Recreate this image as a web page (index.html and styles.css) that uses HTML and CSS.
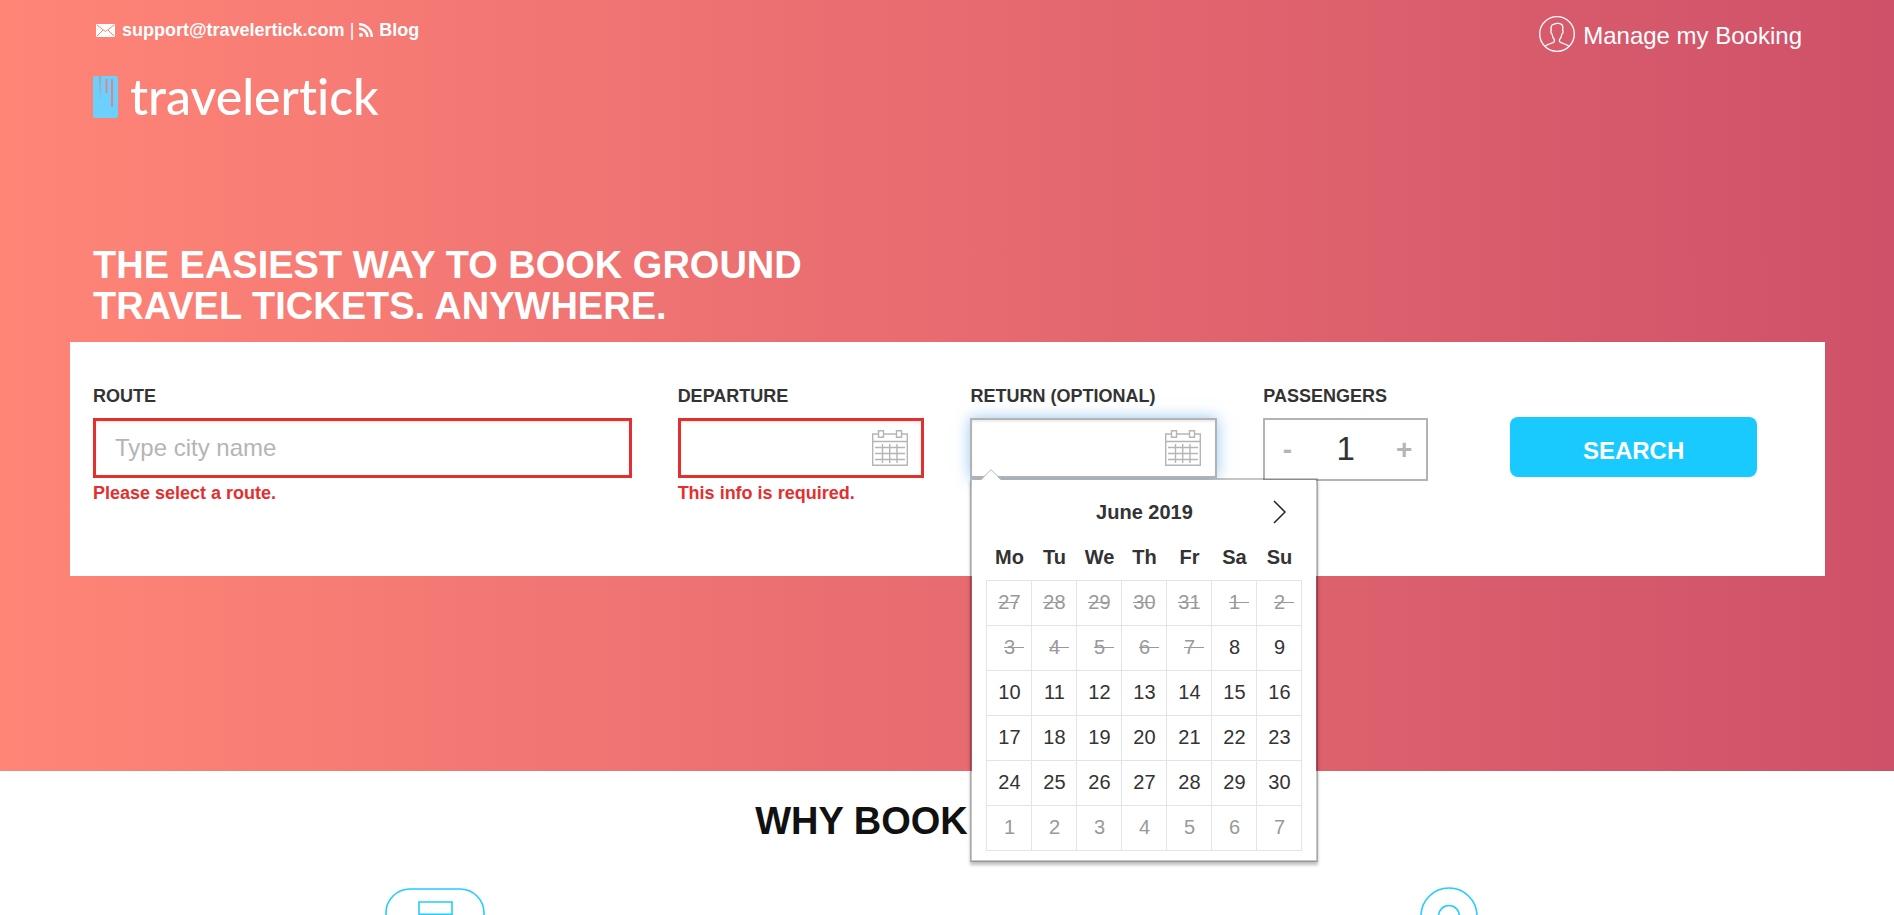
FILE: index.html
```html
<!DOCTYPE html>
<html lang="en">
<head>
<meta charset="utf-8">
<title>travelertick</title>
<link rel="stylesheet" href="styles.css">
</head>
<body>
<div class="hero">
  <header class="header">
    <div class="brand">
      <div class="contact">
        <a class="contact-link" href="mailto:support@travelertick.com"><svg class="icon-mail" viewBox="0 0 19 13" width="19" height="13" aria-hidden="true"><rect width="19" height="13" rx="1" fill="#fff"/><path d="M1 1l8.500 6.500L18 1M1 12l6-6M18 12l-6-6" fill="none" stroke="#fb8075" stroke-width="1"/></svg>support@travelertick.com</a>
        <span class="divider">|</span>
        <a class="contact-link" href="#blog"><svg class="icon-rss" viewBox="0 0 14 14" width="14" height="14" aria-hidden="true"><circle cx="2" cy="12" r="2" fill="#fff"/><path d="M0 5.500A8.500 8.500 0 0 1 8.500 14M0 1.200A12.800 12.800 0 0 1 12.800 14" fill="none" stroke="#fff" stroke-width="2.600"/></svg>Blog</a>
      </div>
      <a class="logo" href="#home"><svg viewBox="0 0 25 42" width="25" height="42" aria-hidden="true"><rect width="25" height="42" rx="2" fill="#6cd0fd"/><path d="M6.200 0h1.600L7.200 26zM12.500 3h2v14h-2zM18 3h2v28h-2z" fill="#d9868f"/></svg><span>travelertick</span></a>
    </div>
    <a class="manage" href="#booking"><svg viewBox="0 0 36 36" width="36" height="36" fill="none" stroke="#fff" stroke-width="1.300" stroke-linejoin="round" aria-hidden="true"><circle cx="18" cy="18" r="17.300"/><path d="M6 30.500c1-1.500 4-2.500 8-3.800 1.300-.5 1.700-1.200 1.500-3-1.600-1.500-2.200-3.500-2.500-5.700-1.300-.8-1.500-3-.7-4-.8-3 .2-5.500 2.700-5.800 2-1.400 8-1.300 8.700 2 .4 1.300.1 2.700-.1 3.800.8 1 .6 3.200-.7 4-.3 2.200-.9 4.200-2.500 5.700-.2 1.800.2 2.500 1.500 3 4 1.300 7 2.300 8 3.800"/></svg>Manage my Booking</a>
  </header>
  <h1 class="headline">The easiest way to book ground<br>travel tickets. Anywhere.</h1>
  <form class="search-card">
    <div class="field">
      <label class="label" for="route">Route</label>
      <input class="input input-error" id="route" type="text" placeholder="Type city name">
      <p class="error">Please select a route.</p>
    </div>
    <div class="field">
      <label class="label" for="departure">Departure</label>
      <div class="date-box">
        <input class="input input-error" id="departure" type="text">
        <svg class="icon-cal" viewBox="0 0 36 36" width="36" height="36" aria-hidden="true"><use href="#cal"/></svg>
      </div>
      <p class="error">This info is required.</p>
    </div>
    <div class="field">
      <label class="label" for="return">Return (optional)</label>
      <div class="date-box">
        <input class="input input-active" id="return" type="text">
        <svg class="icon-cal" viewBox="0 0 36 36" width="36" height="36" aria-hidden="true"><g id="cal" fill="none" stroke="#b5b5b5" stroke-width="1.400"><path d="M6 4H.7v31.300h34.600V4H30M12 4h12M.7 11.500h34.600M3 17.500h30M3 23.500h30M3 29.500h30M10.500 14v19M17.700 14v19M25 14v19"/><path d="M6.500.7h5v6.600h-5zM24.500.7h5v6.600h-5z"/></g></svg>
        <div class="picker">
          <svg class="picker-tip" viewBox="0 0 20 11" width="20" height="11" aria-hidden="true"><path d="M0 11L10 1l10 10z" fill="#fff"/><path d="M0 10.500L10 .7l10 9.800" fill="none" stroke="#b5b5b5"/></svg>
          <div class="picker-head">
            <span>June 2019</span>
            <button class="next" type="button" aria-label="Next month"><svg viewBox="0 0 13 24" width="13" height="24" aria-hidden="true"><path d="M1 1l11 11L1 23" fill="none" stroke="#222" stroke-width="1.500"/></svg></button>
          </div>
          <table class="days">
            <thead><tr><th>Mo</th><th>Tu</th><th>We</th><th>Th</th><th>Fr</th><th>Sa</th><th>Su</th></tr></thead>
            <tbody>
              <tr><td class="past"><span>27</span></td><td class="past"><span>28</span></td><td class="past"><span>29</span></td><td class="past"><span>30</span></td><td class="past"><span>31</span></td><td class="past"><span>1</span></td><td class="past"><span>2</span></td></tr>
              <tr><td class="past"><span>3</span></td><td class="past"><span>4</span></td><td class="past"><span>5</span></td><td class="past"><span>6</span></td><td class="past"><span>7</span></td><td>8</td><td>9</td></tr>
              <tr><td>10</td><td>11</td><td>12</td><td>13</td><td>14</td><td>15</td><td>16</td></tr>
              <tr><td>17</td><td>18</td><td>19</td><td>20</td><td>21</td><td>22</td><td>23</td></tr>
              <tr><td>24</td><td>25</td><td>26</td><td>27</td><td>28</td><td>29</td><td>30</td></tr>
              <tr class="later"><td>1</td><td>2</td><td>3</td><td>4</td><td>5</td><td>6</td><td>7</td></tr>
            </tbody>
          </table>
        </div>
      </div>
    </div>
    <div class="field">
      <label class="label" for="passengers">Passengers</label>
      <div class="stepper">
        <button class="step" type="button" aria-label="Remove passenger">-</button>
        <input class="count" id="passengers" type="text" value="1">
        <button class="step" type="button" aria-label="Add passenger">+</button>
      </div>
    </div>
    <button class="submit" type="button">Search</button>
  </form>
</div>
<section class="why">
  <h2 class="why-title">Why book with us</h2>
  <div class="reasons">
    <svg viewBox="0 0 100 28" width="100" height="28" fill="none" stroke="#22ccff" stroke-width="1.600" aria-hidden="true"><path d="M1 28v-2A24 24 0 0 1 25 2h50a24 24 0 0 1 24 24v2M34 28V15h33v13M34 27.200h33"/></svg>
    <span></span>
    <svg viewBox="0 0 58 28" width="58" height="28" fill="none" stroke="#22ccff" stroke-width="1.600" aria-hidden="true"><circle cx="29" cy="29" r="28"/><circle cx="29" cy="29" r="10.500"/></svg>
  </div>
</section>
</body>
</html>
```

FILE: styles.css
```css
* { box-sizing: border-box; }

body {
  margin: 0;
  font-family: "Liberation Sans", Arial, sans-serif;
  font-size: 18px;
  line-height: 20px;
  color: #333;
  background: #fff;
}

a { color: inherit; text-decoration: none; }
svg { flex: none; display: block; }
button, input { font-family: inherit; }

.hero {
  padding: 20px 69px 195px 70px;
  background: linear-gradient(to right, #ff8577, #cf5169);
}

.header {
  display: flex;
  justify-content: space-between;
  align-items: flex-start;
  padding: 0 23px;
  color: #fff;
}

.contact {
  display: flex;
  gap: 5px;
  padding-left: 3px;
  font-weight: bold;
}

.contact-link { display: flex; align-items: center; }
.divider { font-weight: normal; }
.icon-mail { margin-right: 7px; }
.icon-rss { margin-right: 6px; }

.logo {
  display: flex;
  align-items: center;
  gap: 12px;
  margin-top: 26px;
  font-family: Lato, "Noto Sans", sans-serif;
  font-size: 50px;
  font-weight: 500;
  font-variant-ligatures: none;
  line-height: 60px;
}

.logo span { padding-bottom: 2px; }

.manage {
  display: flex;
  align-items: flex-start;
  gap: 8px;
  margin-top: -4px;
  font-size: 24px;
  line-height: 40px;
}

.headline {
  margin: 117px 23px 15px;
  font-size: 38px;
  line-height: 41px;
  text-transform: uppercase;
  color: #fff;
}

.search-card {
  display: grid;
  grid-template-columns: 539fr 247fr 247fr 201fr 247fr;
  column-gap: 46px;
  align-items: start;
  padding: 44px 68px 73px 23px;
  background: #fff;
}

.field { min-width: 0; }

.label {
  display: block;
  margin-bottom: 12px;
  font-weight: bold;
  text-transform: uppercase;
}

.input {
  display: block;
  width: 100%;
  height: 60px;
  padding: 0 19px;
  border: 2px solid #b3b3b3;
  border-radius: 0;
  outline: none;
  font-size: 24px;
  color: #333;
  background: #fff;
  box-shadow: inset 0 2px 2px rgba(0, 0, 0, 0.08);
}

.input::placeholder { color: #b5b5b5; opacity: 1; }
.input-error { border: 3px solid #e3302f; }

.input-active {
  box-shadow: inset 0 2px 2px rgba(0, 0, 0, 0.08), 0 0 14px rgba(102, 175, 233, 0.7);
}

.error {
  margin: 5px 0 0;
  font-weight: bold;
  color: #e3302f;
}

.date-box { position: relative; }

.icon-cal {
  position: absolute;
  top: 12px;
  right: 16px;
}

.picker {
  position: absolute;
  top: 60px;
  left: 0;
  z-index: 2;
  padding: 10px 14px 9px;
  border: 2px solid rgba(0, 0, 0, 0.22);
  background: #fff;
  background-clip: padding-box;
  box-shadow: 0 3px 3px rgba(0, 0, 0, 0.25);
  font-size: 20px;
}

.picker-tip {
  position: absolute;
  top: -11px;
  left: 9px;
}

.picker-head {
  position: relative;
  font-weight: bold;
  line-height: 45px;
  text-align: center;
}

.next {
  position: absolute;
  top: 0;
  right: 16px;
  height: 44px;
  padding: 0;
  border: 0;
  background: none;
}

.days {
  border-collapse: collapse;
  table-layout: fixed;
  width: 316px;
}

.days th, .days td {
  height: 45px;
  padding: 0;
  text-align: center;
}

.days td {
  padding-bottom: 2px;
  border: 1px solid #e4e4e4;
}

.past, .later { color: #999; }
.past span { position: relative; }

.past span::after {
  content: "";
  position: absolute;
  top: 50%;
  left: 0;
  width: 20px;
  height: 1px;
  background: #999;
}

.stepper {
  display: flex;
  align-items: center;
  width: 165px;
  height: 63px;
  border: 2px solid #b3b3b3;
}

.step {
  width: 44px;
  padding: 0;
  border: 0;
  font-size: 28px;
  font-weight: bold;
  line-height: 56px;
  color: #b5b5b5;
  background: none;
}

.count {
  flex: 1;
  min-width: 0;
  padding: 0 0 2px;
  border: 0;
  outline: none;
  font-size: 33px;
  text-align: center;
  color: #333;
  background: none;
}

.submit {
  height: 60px;
  margin-top: 31px;
  padding: 8px 0 0;
  border: 0;
  border-radius: 8px;
  font-size: 24px;
  font-weight: bold;
  text-transform: uppercase;
  color: #fff;
  background: #18caff;
}

.why { padding-top: 30px; }

.why-title {
  margin: 0 0 45px;
  font-size: 38px;
  line-height: 41px;
  text-align: center;
  text-transform: uppercase;
  color: #111;
}

.reasons {
  display: grid;
  grid-template-columns: repeat(3, 1fr);
  justify-items: center;
  padding: 0 192px 0 181px;
}
```
